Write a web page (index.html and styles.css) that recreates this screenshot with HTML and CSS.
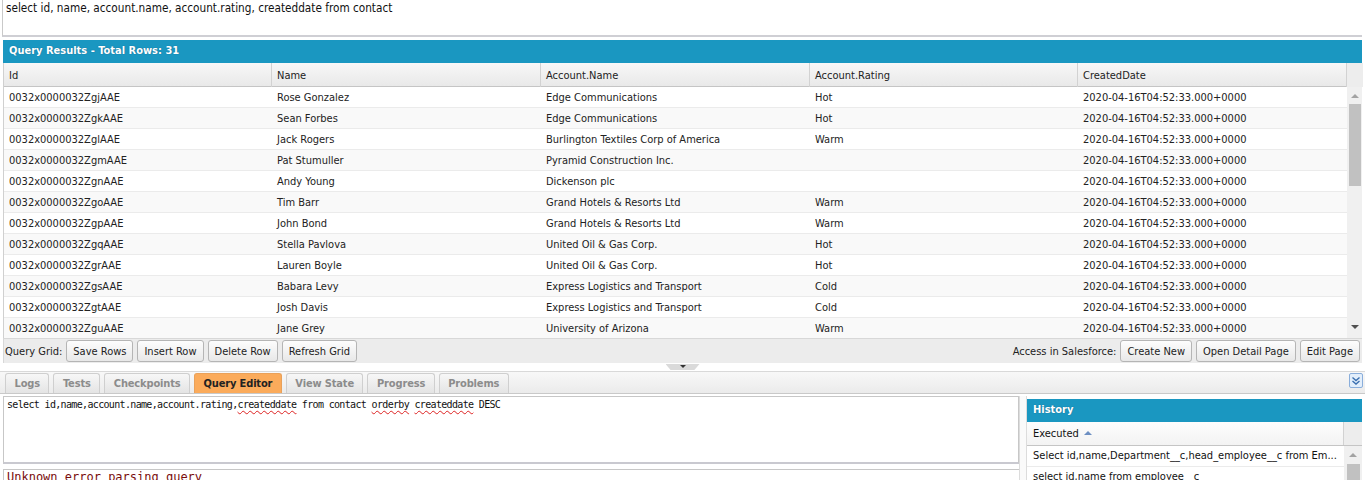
FILE: index.html
```html
<!DOCTYPE html>
<html>
<head>
<meta charset="utf-8">
<title>Query Editor</title>
<link rel="stylesheet" href="styles.css">
</head>
<body>
<div class="app">
  <div class="query-input">select id, name, account.name, account.rating, createddate from contact</div>

  <section class="results">
    <div class="panel-title">Query Results - Total Rows: 31</div>
    <div class="grid">
      <div class="grid-head">
        <div class="hcell">Id</div>
        <div class="hcell">Name</div>
        <div class="hcell">Account.Name</div>
        <div class="hcell">Account.Rating</div>
        <div class="hcell">CreatedDate</div>
        <div class="hcell hscroll"></div>
      </div>
      <div class="grid-body">
        <div class="rows">
          <div class="row"><div class="cell">0032x0000032ZgjAAE</div><div class="cell">Rose Gonzalez</div><div class="cell">Edge Communications</div><div class="cell">Hot</div><div class="cell">2020-04-16T04:52:33.000+0000</div></div>
          <div class="row"><div class="cell">0032x0000032ZgkAAE</div><div class="cell">Sean Forbes</div><div class="cell">Edge Communications</div><div class="cell">Hot</div><div class="cell">2020-04-16T04:52:33.000+0000</div></div>
          <div class="row"><div class="cell">0032x0000032ZglAAE</div><div class="cell">Jack Rogers</div><div class="cell">Burlington Textiles Corp of America</div><div class="cell">Warm</div><div class="cell">2020-04-16T04:52:33.000+0000</div></div>
          <div class="row"><div class="cell">0032x0000032ZgmAAE</div><div class="cell">Pat Stumuller</div><div class="cell">Pyramid Construction Inc.</div><div class="cell"></div><div class="cell">2020-04-16T04:52:33.000+0000</div></div>
          <div class="row"><div class="cell">0032x0000032ZgnAAE</div><div class="cell">Andy Young</div><div class="cell">Dickenson plc</div><div class="cell"></div><div class="cell">2020-04-16T04:52:33.000+0000</div></div>
          <div class="row"><div class="cell">0032x0000032ZgoAAE</div><div class="cell">Tim Barr</div><div class="cell">Grand Hotels &amp; Resorts Ltd</div><div class="cell">Warm</div><div class="cell">2020-04-16T04:52:33.000+0000</div></div>
          <div class="row"><div class="cell">0032x0000032ZgpAAE</div><div class="cell">John Bond</div><div class="cell">Grand Hotels &amp; Resorts Ltd</div><div class="cell">Warm</div><div class="cell">2020-04-16T04:52:33.000+0000</div></div>
          <div class="row"><div class="cell">0032x0000032ZgqAAE</div><div class="cell">Stella Pavlova</div><div class="cell">United Oil &amp; Gas Corp.</div><div class="cell">Hot</div><div class="cell">2020-04-16T04:52:33.000+0000</div></div>
          <div class="row"><div class="cell">0032x0000032ZgrAAE</div><div class="cell">Lauren Boyle</div><div class="cell">United Oil &amp; Gas Corp.</div><div class="cell">Hot</div><div class="cell">2020-04-16T04:52:33.000+0000</div></div>
          <div class="row"><div class="cell">0032x0000032ZgsAAE</div><div class="cell">Babara Levy</div><div class="cell">Express Logistics and Transport</div><div class="cell">Cold</div><div class="cell">2020-04-16T04:52:33.000+0000</div></div>
          <div class="row"><div class="cell">0032x0000032ZgtAAE</div><div class="cell">Josh Davis</div><div class="cell">Express Logistics and Transport</div><div class="cell">Cold</div><div class="cell">2020-04-16T04:52:33.000+0000</div></div>
          <div class="row"><div class="cell">0032x0000032ZguAAE</div><div class="cell">Jane Grey</div><div class="cell">University of Arizona</div><div class="cell">Warm</div><div class="cell">2020-04-16T04:52:33.000+0000</div></div>
        </div>
        <div class="vscroll">
          <span class="arrow up"></span>
          <div class="track"><div class="thumb"></div></div>
          <span class="arrow down"></span>
        </div>
      </div>
    </div>
    <div class="toolbar">
      <div class="tool-group">
        <span class="tool-label">Query Grid:</span>
        <button class="btn">Save Rows</button>
        <button class="btn">Insert Row</button>
        <button class="btn">Delete Row</button>
        <button class="btn">Refresh Grid</button>
      </div>
      <div class="tool-group">
        <span class="tool-label">Access in Salesforce:</span>
        <button class="btn">Create New</button>
        <button class="btn">Open Detail Page</button>
        <button class="btn">Edit Page</button>
      </div>
    </div>
  </section>

  <div class="splitter"><span class="notch"><span class="notch-arrow"></span></span></div>

  <div class="tabstrip">
    <div class="tabs">
      <div class="tab">Logs</div>
      <div class="tab">Tests</div>
      <div class="tab">Checkpoints</div>
      <div class="tab active">Query Editor</div>
      <div class="tab">View State</div>
      <div class="tab">Progress</div>
      <div class="tab">Problems</div>
    </div>
    <div class="collapse">
      <svg width="10" height="10" viewBox="0 0 10 10"><path d="M1.5 1.5 L5 4.5 L8.5 1.5 M1.5 5 L5 8 L8.5 5" fill="none" stroke="#3a6fb0" stroke-width="1.4"/></svg>
    </div>
  </div>

  <div class="bottom">
    <div class="editor-col">
      <div class="editor">select id,name,account.name,account.rating,<span class="sp">createddate</span> from contact <span class="sp">orderby</span> <span class="sp">createddate</span> DESC</div>
      <div class="error">Unknown error parsing query</div>
    </div>
    <div class="vsplit"></div>
    <div class="history">
      <div class="panel-title">History</div>
      <div class="hist-head">
        <div class="hist-col">Executed <span class="sort-up"></span></div>
        <div class="hist-scrollhead"></div>
      </div>
      <div class="hist-body">
        <div class="hist-rows">
          <div class="hist-row">Select id,name,Department__c,head_employee__c from Em...</div>
          <div class="hist-row">select id,name from employee__c</div>
        </div>
        <div class="hist-scroll">
          <span class="arrow up"></span>
          <div class="hist-thumb"></div>
        </div>
      </div>
    </div>
  </div>
</div>
</body>
</html>
```

FILE: styles.css
```css
* { box-sizing: border-box; }
html, body { margin: 0; padding: 0; background: #fff; }
body {
  font-family: "DejaVu Sans Condensed", "Liberation Sans", sans-serif;
  font-stretch: condensed;
  font-size: 11px;
  color: #222;
  overflow: hidden;
  height: 480px;
}
.app { width: 1365px; padding: 0 3px 0 3px; }

.query-input {
  height: 37px;
  margin-left: -1px;
  border-left: 1px solid #c9c9c9;
  border-bottom: 2px solid #cfcfd4;
  padding: 1px 0 0 3px;
  font-size: 11.7px;
  line-height: 14px;
  color: #111;
  background: #fff;
}

.results { margin-top: 3px; }

.panel-title {
  height: 23px;
  background: #1a97c1;
  color: #fff;
  font-weight: bold;
  font-size: 11px;
  line-height: 22px;
  padding-left: 6px;
  text-shadow: 0 0 1px rgba(0,40,80,0.5);
}

.grid { border-left: 1px solid #d0d0d0; }
.grid-head {
  display: grid;
  grid-template-columns: 268px 269px 269px 268px 269px 16px;
  height: 24px;
  background: linear-gradient(#f7f7f7, #e9e9e9);
  border-bottom: 1px solid #c5c5c5;
}
.hcell {
  border-right: 1px solid #d2d2d2;
  padding: 1px 0 0 5px;
  line-height: 23px;
  color: #222;
}
.hcell.hscroll { border-right: 0; background: #ededed; }

.grid-body { display: flex; height: 251px; overflow: hidden; }
.rows { width: 1343px; }
.row {
  display: grid;
  grid-template-columns: 268px 269px 269px 268px 269px;
  height: 21px;
  border-bottom: 1px solid #ebebeb;
}
.row:nth-child(even) { background: #f9f9f9; }
.cell { padding: 1px 0 0 5px; line-height: 20px; white-space: nowrap; overflow: hidden; }

.vscroll {
  width: 16px;
  background: #f0f0f0;
  display: flex;
  flex-direction: column;
  align-items: center;
}
.arrow { width: 0; height: 0; border-left: 4px solid transparent; border-right: 4px solid transparent; }
.arrow.up { border-bottom: 4px solid #a3a3a3; margin-top: 7px; }
.arrow.down { border-top: 4px solid #505050; margin-bottom: 9px; }
.track { flex: 1; width: 100%; padding: 6px 1px 0 2px; }
.thumb { height: 82px; background: #c1c1c1; }

.toolbar {
  height: 25px;
  background: #ececec;
  border-top: 1px solid #d8d8d8;
  border-left: 1px solid #d8d8d8;
  display: flex;
  justify-content: space-between;
  align-items: center;
  padding: 0 2px 0 1px;
}
.tool-group { display: flex; align-items: center; gap: 4px; }
.tool-label { font-size: 11px; color: #222; margin-right: 0; }
.btn {
  font: inherit;
  font-size: 11px;
  color: #222;
  height: 22px;
  padding: 0 6px;
  border: 1px solid #b5b5b5;
  border-radius: 3px;
  background: linear-gradient(#fdfdfd, #e8e8e8);
}

.splitter {
  height: 9px;
  border-bottom: 1px solid #d9d9d9;
  display: flex;
  justify-content: center;
  margin-left: -3px;
  margin-right: -3px;
  padding-top: 1px;
}
.notch {
  width: 34px;
  height: 6px;
  background: #dadada;
  clip-path: polygon(0 0, 100% 0, 85% 100%, 15% 100%);
  display: flex;
  justify-content: center;
  padding-top: 1px;
}
.notch-arrow { width: 0; height: 0; border-left: 3px solid transparent; border-right: 3px solid transparent; border-top: 3px solid #333; }

.tabstrip {
  height: 22px;
  display: flex;
  justify-content: space-between;
  align-items: flex-end;
  background: linear-gradient(#f8f8f8, #ebebeb);
  border-bottom: 1px solid #c9c9c9;
  margin-left: -3px;
  margin-right: -3px;
  padding: 0 2px 0 5px;
}
.tabs { display: flex; gap: 4px; }
.tab {
  height: 20px;
  padding: 0 8.5px;
  border: 1px solid #cfcfcf;
  border-bottom: 0;
  border-radius: 3px 3px 0 0;
  background: linear-gradient(#f7f7f7, #e4e4e4);
  color: #8c8c8c;
  font-weight: bold;
  letter-spacing: -0.15px;
  line-height: 20px;
}
.tab.active { background: #fbab5b; color: #222; border-color: #e9a15a; }
.collapse {
  width: 14px;
  height: 15px;
  margin-bottom: 5px;
  border: 1px solid #8aaedb;
  border-radius: 2px;
  background: #e2eefb;
  display: flex;
  align-items: center;
  justify-content: center;
}

.bottom { display: flex; margin-top: 2px; }
.editor-col { width: 1016px; }
.editor {
  height: 68px;
  border: 1px solid #c7c7c7;
  border-bottom: 2px solid #c9c9d0;
  background: #fff;
  font-family: "DejaVu Sans Mono", "Liberation Mono", monospace;
  font-stretch: normal;
  font-size: 10px;
  letter-spacing: -0.66px;
  line-height: 14px;
  padding: 1px 3px;
  color: #111;
}
.sp { text-decoration: underline wavy #d22; text-decoration-thickness: 1px; text-underline-offset: 2px; }
.error {
  margin-top: 5px;
  height: 20px;
  border-left: 1px solid #c7c7c7;
  border-top: 1px solid #c7c7c7;
  font-family: "DejaVu Sans Mono", "Liberation Mono", monospace;
  font-stretch: normal;
  font-size: 12px;
  color: #7a0d0d;
  padding: 0 3px;
  line-height: 14px;
}
.vsplit {
  width: 8px;
  border-left: 1px solid #dcdcdc;
  border-right: 1px solid #dcdcdc;
  background: #fafafa;
}
.history { flex: 1; margin-top: 3px; }
.hist-head {
  display: flex;
  height: 24px;
  border-bottom: 1px solid #c5c5c5;
}
.hist-col {
  flex: 1;
  background: linear-gradient(#fdfdfd, #f3f3f3);
  border-right: 1px solid #d2d2d2;
  padding-left: 6px;
  line-height: 23px;
  color: #111;
}
.sort-up { display: inline-block; width: 0; height: 0; border-left: 4px solid transparent; border-right: 4px solid transparent; border-bottom: 4px solid #6d8fc2; vertical-align: 2px; margin-left: 2px; }
.hist-scrollhead { width: 18px; background: #ededed; }
.hist-body { display: flex; height: 40px; }
.hist-rows { flex: 1; }
.hist-row { height: 21px; border-bottom: 1px solid #ebebeb; padding-left: 6px; line-height: 20px; white-space: nowrap; color: #111; }
.hist-scroll { width: 18px; background: #f0f0f0; display: flex; flex-direction: column; align-items: center; }
.hist-thumb { width: 13px; flex: 1; margin-top: 7px; background: #c1c1c1; }
```
